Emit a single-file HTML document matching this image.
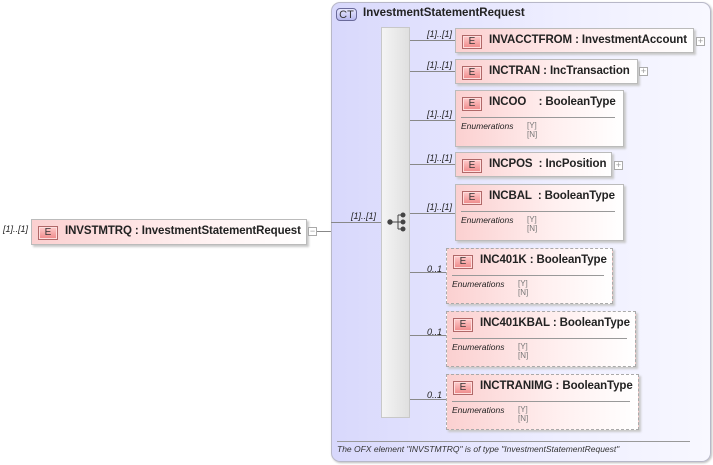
<!DOCTYPE html>
<html><head><meta charset="utf-8"><style>
*{margin:0;padding:0;box-sizing:border-box}
body{width:713px;height:465px;background:#fff;font-family:"Liberation Sans",Arial,sans-serif;position:relative;overflow:hidden}
.a{position:absolute}
.ct{left:331px;top:2px;width:380px;height:460px;border:1px solid #b8b8c8;border-radius:9px;background:linear-gradient(90deg,#d8d8fc,#eeeeff 60%,#f8f8ff);box-shadow:1px 1px 2px #bbb}
.badge{border:1px solid #6a6a9a;border-radius:4px;background:linear-gradient(#e8e8ff,#b8b8ee);font-size:11px;color:#333;text-align:center;line-height:12px}
.seq{left:381px;top:27px;width:29px;height:391px;background:linear-gradient(90deg,#f4f4f4,#e0e0e0);border:1px solid #c8c8c8}
.el{background:linear-gradient(90deg,#fbd0d0,#fff0f0 60%,#fff);border:1px solid #bbb;box-shadow:2px 2px 2px #c8c8c8}
.el.d{border:1px dashed #aaa}
.e{position:absolute;left:6px;top:6px;width:20px;height:14px;border:1px solid #b06868;background:linear-gradient(#fcc,#e88);font-size:10px;color:#333;text-align:center;line-height:12px;box-shadow:inset 0 0 0 1px #fdd}
.t{position:absolute;left:33px;top:5px;font-size:11.5px;font-weight:bold;color:#222;white-space:pre;letter-spacing:-0.1px}
.hr{position:absolute;left:5px;right:8px;top:26px;border-top:1px solid #999}
.en{position:absolute;left:5px;top:30px;font-size:8.5px;font-style:italic;color:#222}
.v{position:absolute;left:71px;top:30px;font-size:8px;color:#777;line-height:9px}
.lbl{font-size:9px;font-style:italic;color:#222}
.ln{background:#888;height:1px}
.pm{width:9px;height:9px;border:1px solid #aaa;background:#fff;font-size:9px;line-height:7px;text-align:center;color:#999}
</style></head><body>
<div class="a lbl" style="left:3px;top:224px">[1]..[1]</div>
<div class="a el" style="left:31px;top:219px;width:276px;height:26px"><div class="e">E</div><div class="t">INVSTMTRQ : InvestmentStatementRequest</div></div>
<div class="a pm" style="left:308px;top:227px">−</div>
<div class="a ln" style="left:317px;top:231px;width:14px"></div>
<div class="a ct"></div>
<div class="a badge" style="left:336px;top:8px;width:21px;height:13px">CT</div>
<div class="a" style="left:363px;top:7px;font-size:11.5px;font-weight:bold;color:#222">InvestmentStatementRequest</div>
<div class="a ln" style="left:331px;top:222px;width:51px"></div>
<div class="a lbl" style="left:351px;top:211px">[1]..[1]</div>
<div class="a seq"></div>
<svg class="a" style="left:381px;top:208px" width="30" height="28"><g fill="#444" stroke="#444"><circle cx="9" cy="14" r="2.2"/><line x1="9" y1="14" x2="17" y2="14"/><line x1="17" y1="7" x2="17" y2="21"/><line x1="17" y1="7" x2="22" y2="7"/><line x1="17" y1="21" x2="22" y2="21"/><line x1="17" y1="14" x2="22" y2="14"/><circle cx="22" cy="7" r="2"/><circle cx="22" cy="14" r="2"/><circle cx="22" cy="21" r="2"/></g></svg>

<div class="a ln" style="left:410px;top:40px;width:45px"></div><div class="a lbl" style="left:427px;top:29px">[1]..[1]</div>
<div class="a el" style="left:455px;top:28px;width:239px;height:25px"><div class="e">E</div><div class="t">INVACCTFROM : InvestmentAccount</div></div>
<div class="a pm" style="left:696px;top:37px">+</div>

<div class="a ln" style="left:410px;top:71px;width:45px"></div><div class="a lbl" style="left:427px;top:60px">[1]..[1]</div>
<div class="a el" style="left:455px;top:59px;width:183px;height:25px"><div class="e">E</div><div class="t">INCTRAN : IncTransaction</div></div>
<div class="a pm" style="left:639px;top:67px">+</div>

<div class="a ln" style="left:410px;top:120px;width:45px"></div><div class="a lbl" style="left:427px;top:109px">[1]..[1]</div>
<div class="a el" style="left:455px;top:90px;width:169px;height:57px"><div class="e">E</div><div class="t">INCOO    : BooleanType</div><div class="hr"></div><div class="en">Enumerations</div><div class="v">[Y]<br>[N]</div></div>

<div class="a ln" style="left:410px;top:164px;width:45px"></div><div class="a lbl" style="left:427px;top:153px">[1]..[1]</div>
<div class="a el" style="left:455px;top:152px;width:157px;height:25px"><div class="e">E</div><div class="t">INCPOS  : IncPosition</div></div>
<div class="a pm" style="left:614px;top:161px">+</div>

<div class="a ln" style="left:410px;top:213px;width:45px"></div><div class="a lbl" style="left:427px;top:202px">[1]..[1]</div>
<div class="a el" style="left:455px;top:184px;width:169px;height:57px"><div class="e">E</div><div class="t">INCBAL  : BooleanType</div><div class="hr"></div><div class="en">Enumerations</div><div class="v">[Y]<br>[N]</div></div>

<div class="a ln" style="left:410px;top:272px;width:36px"></div><div class="a lbl" style="left:427px;top:264px">0..1</div>
<div class="a el d" style="left:446px;top:248px;width:167px;height:56px"><div class="e">E</div><div class="t">INC401K : BooleanType</div><div class="hr"></div><div class="en">Enumerations</div><div class="v">[Y]<br>[N]</div></div>

<div class="a ln" style="left:410px;top:335px;width:36px"></div><div class="a lbl" style="left:427px;top:327px">0..1</div>
<div class="a el d" style="left:446px;top:311px;width:190px;height:56px"><div class="e">E</div><div class="t">INC401KBAL : BooleanType</div><div class="hr"></div><div class="en">Enumerations</div><div class="v">[Y]<br>[N]</div></div>

<div class="a ln" style="left:410px;top:399px;width:36px"></div><div class="a lbl" style="left:427px;top:390px">0..1</div>
<div class="a el d" style="left:446px;top:374px;width:193px;height:56px"><div class="e">E</div><div class="t">INCTRANIMG : BooleanType</div><div class="hr"></div><div class="en">Enumerations</div><div class="v">[Y]<br>[N]</div></div>

<div class="a" style="left:337px;top:441px;width:353px;border-top:1px solid #999"></div>
<div class="a" style="left:337px;top:444px;font-size:8.5px;font-style:italic;color:#333">The OFX element "INVSTMTRQ" is of type "InvestmentStatementRequest"</div>
</body></html>
